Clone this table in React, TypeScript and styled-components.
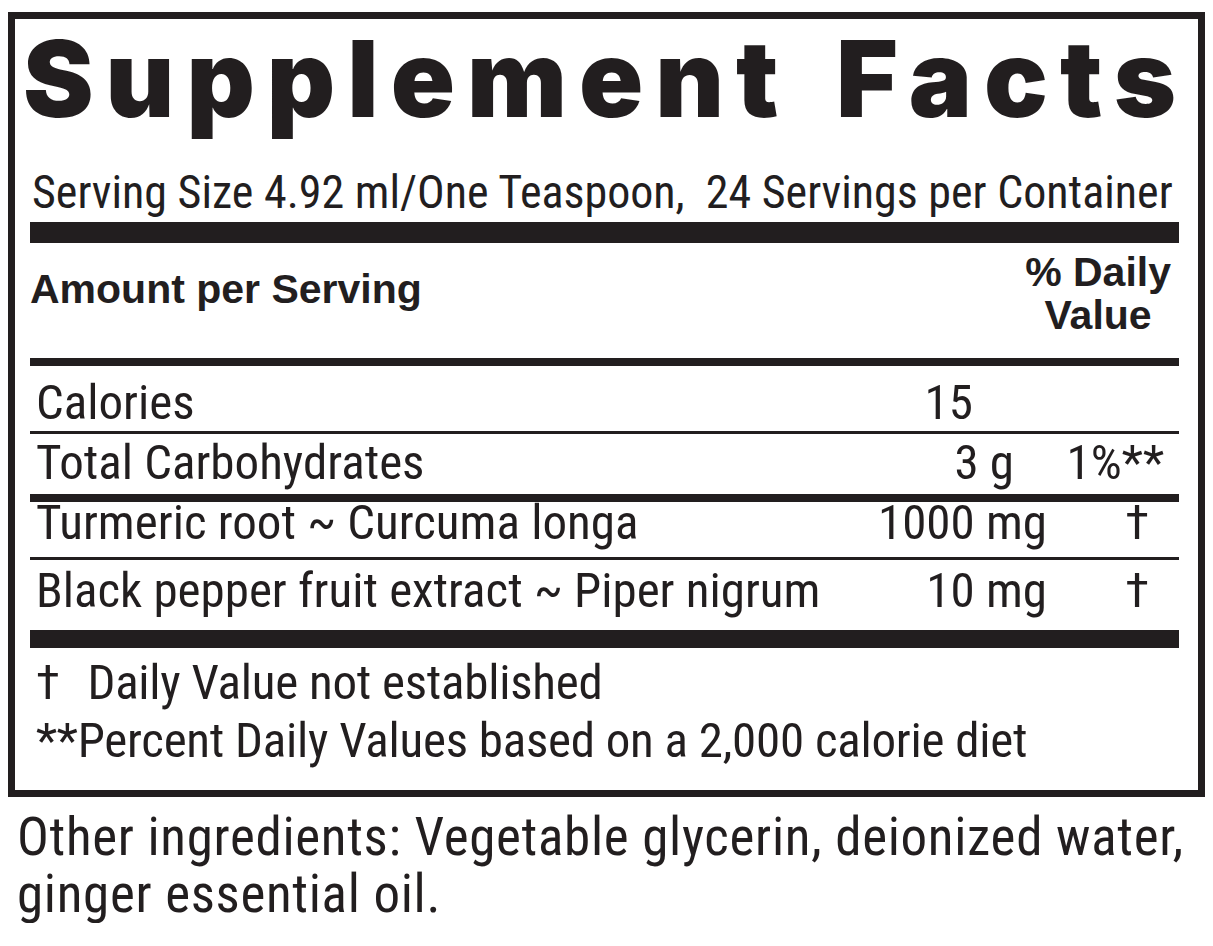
import React from "react";
import styled, { createGlobalStyle } from "styled-components";

const ink = "#221e1f";
const condensed = `"Roboto Condensed", "Liberation Sans", sans-serif`;

const GlobalStyle = createGlobalStyle`
  html, body { background: #ffffff; }
  body { margin: 8px; color: ${ink}; }
`;

const Page = styled.div`
  padding-top: 4px;
  width: 1197px;
`;

const Label = styled.section`
  box-sizing: border-box;
  width: 1197px;
  border: 7px solid ${ink};
  padding: 0 19px 0 15px;
  display: flex;
  flex-direction: column;
`;

const Title = styled.h1`
  margin: 0 -9px 29px -7px;
  font-family: Inter, "Liberation Sans", sans-serif;
  font-weight: 900;
  font-size: 106px;
  line-height: 119px;
  height: 119px;
  letter-spacing: 12px;
  white-space: nowrap;
  display: flex;
  justify-content: space-between;
`;

const Serving = styled.div`
  font-family: ${condensed};
  font-size: 46px;
  line-height: 50px;
  white-space: pre;
  padding-left: 2px;
`;

const Rule = styled.div<{ $h: number; $mt?: number }>`
  height: ${(p) => p.$h}px;
  margin-top: ${(p) => p.$mt ?? 0}px;
  background: ${ink};
  flex: none;
`;

const Header = styled.div`
  display: flex;
  justify-content: space-between;
  align-items: flex-start;
  padding: 8px 0 21px 0;
  font-family: "Liberation Sans", Arial, sans-serif;
  font-weight: 700;
  font-size: 41px;
  line-height: 43px;
`;

const HeaderLeft = styled.div`
  padding-top: 17px;
`;

const HeaderRight = styled.div`
  text-align: center;
  padding-right: 8px;
`;

const Row = styled.div<{ $h: number; $pt: number }>`
  display: grid;
  grid-template-columns: 1fr auto 132px;
  box-sizing: border-box;
  height: ${(p) => p.$h}px;
  padding-top: ${(p) => p.$pt}px;
  padding-left: 6px;
  font-family: ${condensed};
  font-size: 49px;
  line-height: 40px;
  white-space: nowrap;
`;

const Name = styled.span``;

const Amount = styled.span<{ $pr: number }>`
  text-align: right;
  padding-right: ${(p) => p.$pr}px;
`;

const DV = styled.span<{ $pr: number }>`
  text-align: right;
  padding-right: ${(p) => p.$pr}px;
`;

const Footnotes = styled.div`
  padding: 6px 0 20px 6px;
  font-family: ${condensed};
  font-size: 49px;
  line-height: 58px;
  letter-spacing: -0.25px;
  white-space: pre;
`;

const Dagger = styled.span`
  display: inline-block;
  margin-right: 6px;
`;

const Other = styled.p`
  margin: 12px 0 0 0;
  padding-left: 9px;
  width: 1195px;
  font-family: ${condensed};
  font-size: 53px;
  line-height: 57px;
  letter-spacing: 0.7px;
`;

type Item = {
  name: string;
  amount: string;
  amountPad: number;
  dv: string;
  dvPad: number;
  h: number;
  pt: number;
  rule: number;
};

const items: Item[] = [
  { name: "Calories", amount: "15", amountPad: 74, dv: "", dvPad: 0, h: 65, pt: 17, rule: 3 },
  { name: "Total Carbohydrates", amount: "3 g", amountPad: 33, dv: "1%**", dvPad: 15, h: 60, pt: 9, rule: 8 },
  { name: "Turmeric root ~ Curcuma longa", amount: "1000 mg", amountPad: 0, dv: "†", dvPad: 30, h: 55, pt: 1, rule: 3 },
  { name: "Black pepper fruit extract ~ Piper nigrum", amount: "10 mg", amountPad: 0, dv: "†", dvPad: 30, h: 70, pt: 11, rule: 18 },
];

export default function App() {
  return (
    <Page>
      <GlobalStyle />
      <Label>
        <Title>
          <span>Supplement</span>
          <span>Facts</span>
        </Title>
        <Serving>Serving Size 4.92 ml/One Teaspoon,  24 Servings per Container</Serving>
        <Rule $h={21} $mt={5} />
        <Header>
          <HeaderLeft>Amount per Serving</HeaderLeft>
          <HeaderRight>
            % Daily
            <br />
            Value
          </HeaderRight>
        </Header>
        <Rule $h={8} />
        {items.map((it) => (
          <React.Fragment key={it.name}>
            <Row $h={it.h} $pt={it.pt}>
              <Name>{it.name}</Name>
              <Amount $pr={it.amountPad}>{it.amount}</Amount>
              <DV $pr={it.dvPad}>{it.dv}</DV>
            </Row>
            <Rule $h={it.rule} />
          </React.Fragment>
        ))}
        <Footnotes>
          <Dagger>†</Dagger>
          {"  Daily Value not established"}
          <br />
          {"**Percent Daily Values based on a 2,000 calorie diet"}
        </Footnotes>
      </Label>
      <Other>
        Other ingredients: Vegetable glycerin, deionized water, ginger essential oil.
      </Other>
    </Page>
  );
}
